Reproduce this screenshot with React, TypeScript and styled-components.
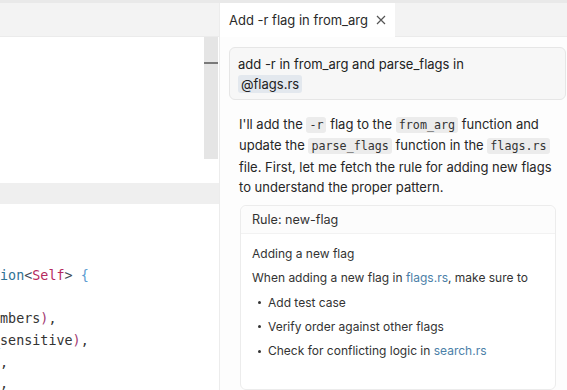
import React from "react";
import styled, { createGlobalStyle } from "styled-components";

const GlobalStyle = createGlobalStyle`
  html, body {
    margin: 0;
    padding: 0;
    background: #ffffff;
    overflow: hidden;
  }
`;

const Frame = styled.div`
  width: 567px;
  height: 390px;
  border-top: 3px solid #e9e9e9;
  box-sizing: border-box;
  display: grid;
  grid-template-columns: 220px 1fr;
  font-family: Inter, "Liberation Sans", sans-serif;
  color: #2b2b2b;
  overflow: hidden;
`;

const LeftColumn = styled.div`
  display: flex;
  flex-direction: column;
  min-height: 0;
  border-right: 1px solid #ececec;
  box-sizing: border-box;
`;

const TabBar = styled.div`
  height: 34px;
  flex: none;
  background: #f3f3f3;
  border-bottom: 1px solid #ebebeb;
  box-sizing: border-box;
  display: flex;
`;

const Editor = styled.div`
  height: 146px;
  flex: none;
  display: flex;
  background: #ffffff;
`;

const EditorBody = styled.div`
  flex: 1;
`;

const Scrollbar = styled.div`
  width: 14px;
  height: 122px;
  margin-right: 1px;
  background: #e5e5e5;
  display: flex;
  flex-direction: column;
  padding-top: 25px;
  box-sizing: border-box;
`;

const ScrollMark = styled.div`
  height: 2px;
  background: #7a7a7a;
`;

const PanelStrip = styled.div`
  height: 21px;
  flex: none;
  background: #efefef;
`;

const CodeArea = styled.div`
  flex: 1;
  overflow: hidden;
  background: #ffffff;
  padding-top: 18px;
`;

const CodeBlock = styled.pre`
  margin: 0 0 0 -21ch;
  font-family: "DejaVu Sans Mono", "Liberation Mono", monospace;
  font-size: 13.4px;
  line-height: 21.6px;
  color: #333333;
  white-space: pre;
`;

const Tok = styled.span<{ $kind: "type" | "punct" | "self" | "brace" | "paren" }>`
  color: ${({ $kind }) =>
    $kind === "type"
      ? "#2f7294"
      : $kind === "self"
      ? "#b5295e"
      : $kind === "brace"
      ? "#5b9bd1"
      : $kind === "paren"
      ? "#a33b73"
      : "#3d4a55"};
`;

const RightColumn = styled.div`
  display: flex;
  flex-direction: column;
  min-height: 0;
  background: #fdfdfd;
`;

const Tab = styled.div`
  width: 175px;
  background: #ffffff;
  display: flex;
  align-items: center;
  gap: 8px;
  padding-left: 9px;
  box-sizing: border-box;
  font-size: 13px;
  color: #2a2a2a;
  margin-bottom: -1px;
`;

const CloseIcon = () => (
  <svg width="10" height="10" viewBox="0 0 10 10">
    <path d="M1 1 L9 9 M9 1 L1 9" stroke="#555" strokeWidth="1.2" fill="none" />
  </svg>
);

const Content = styled.div`
  flex: 1;
  padding: 10px 1px 0 9px;
  display: flex;
  flex-direction: column;
  overflow: hidden;
`;

const UserBubble = styled.div`
  background: #f7f7f7;
  border: 1px solid #e6e6e6;
  border-radius: 6px;
  padding: 6px 8px 5px;
  font-size: 13px;
  line-height: 20px;
  color: #222222;
`;

const Mention = styled.span`
  background: #e3e8ee;
  border-radius: 3px;
  padding: 1px 3px;
`;

const AssistantText = styled.p`
  margin: 14px 8px 0 10px;
  font-size: 13px;
  line-height: 20.3px;
  color: #262626;
`;

const InlineCode = styled.code`
  font-family: "DejaVu Sans Mono", "Liberation Mono", monospace;
  font-size: 11.7px;
  background: #ececec;
  border-radius: 3px;
  padding: 1px 3px;
  color: #333333;
`;

const RuleCard = styled.div`
  margin: 8px 10px 0 11px;
  border: 1px solid #ececec;
  border-radius: 6px;
  background: #ffffff;
  flex: 1;
`;

const RuleHeader = styled.div`
  height: 27px;
  padding: 0 11px;
  display: flex;
  align-items: center;
  font-size: 12.6px;
  color: #333333;
  background: #fcfcfc;
  border-bottom: 1px solid #f2f2f2;
  border-radius: 6px 6px 0 0;
`;

const RuleBody = styled.div`
  padding: 8px 11px 0;
  font-size: 12px;
  line-height: 24.2px;
  color: #333333;
`;

const RuleLine = styled.div``;

const BulletList = styled.ul`
  margin: 0;
  padding: 0 0 0 6px;
  list-style: none;
`;

const Bullet = styled.li`
  display: flex;
  align-items: center;
  gap: 7px;
  &::before {
    content: "";
    width: 3px;
    height: 3px;
    border-radius: 50%;
    background: #333;
  }
`;

const Link = styled.span`
  color: #4b80a8;
`;

const codeLines: React.ReactNode[] = [
  "",
  "",
  <>
    {"  pub fn new() -> Opt"}
    <Tok $kind="type">ion</Tok>
    <Tok $kind="punct">{"<"}</Tok>
    <Tok $kind="self">Self</Tok>
    <Tok $kind="punct">{"> "}</Tok>
    <Tok $kind="brace">{"{"}</Tok>
  </>,
  "",
  <>
    {"    flag(show_line_nu"}mbers<Tok $kind="paren">)</Tok>,
  </>,
  <>
    {"    flag(ignore_case_"}sensitive<Tok $kind="paren">)</Tok>,
  </>,
  <>{"    flag(recursive)  "},</>,
  <>
    {"    flag(hidden_file"}
    <Tok $kind="paren">)</Tok>,
  </>,
];

export default function App() {
  return (
    <>
      <GlobalStyle />
      <Frame>
        <LeftColumn>
          <TabBar />
          <Editor>
            <EditorBody />
            <Scrollbar>
              <ScrollMark />
            </Scrollbar>
          </Editor>
          <PanelStrip />
          <CodeArea>
            <CodeBlock>
              {codeLines.map((line, i) => (
                <div key={i}>{line === "" ? " " : line}</div>
              ))}
            </CodeBlock>
          </CodeArea>
        </LeftColumn>
        <RightColumn>
          <TabBar>
            <Tab>
              Add -r flag in from_arg
              <CloseIcon />
            </Tab>
          </TabBar>
          <Content>
            <UserBubble>
              add -r in from_arg and parse_flags in
              <br />
              <Mention>@flags.rs</Mention>
            </UserBubble>
            <AssistantText>
              I'll add the <InlineCode>-r</InlineCode> flag to the{" "}
              <InlineCode>from_arg</InlineCode> function and update the{" "}
              <InlineCode>parse_flags</InlineCode> function in the{" "}
              <InlineCode>flags.rs</InlineCode> file. First, let me fetch the
              rule for adding new flags to understand the proper pattern.
            </AssistantText>
            <RuleCard>
              <RuleHeader>Rule: new-flag</RuleHeader>
              <RuleBody>
                <RuleLine>Adding a new flag</RuleLine>
                <RuleLine>
                  When adding a new flag in <Link>flags.rs</Link>, make sure to
                </RuleLine>
                <BulletList>
                  <Bullet>Add test case</Bullet>
                  <Bullet>Verify order against other flags</Bullet>
                  <Bullet>
                    <span>
                      Check for conflicting logic in <Link>search.rs</Link>
                    </span>
                  </Bullet>
                </BulletList>
              </RuleBody>
            </RuleCard>
          </Content>
        </RightColumn>
      </Frame>
    </>
  );
}
